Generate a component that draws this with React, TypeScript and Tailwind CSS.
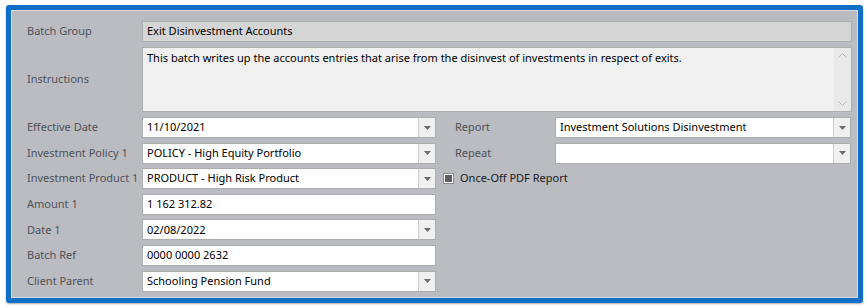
import React from "react"

const font = { fontFamily: '"Noto Sans", "Open Sans", sans-serif' }

const Arrow = () => (
    <svg width="7" height="4" viewBox="0 0 7 4">
        <path d="M0 0 H7 L3.5 4 Z" fill="#6b6b6b" />
    </svg>
)

const Label = ({ text }: { text: string }) => (
    <div className="h-[21px] flex items-center text-[11px] text-[#4f5156] whitespace-nowrap">{text}</div>
)

const TextBox = ({ value }: { value: string }) => (
    <div className="h-[21px] bg-white border border-[#adadad] flex items-center px-[4px] text-[11px] text-black whitespace-nowrap overflow-hidden">
        {value}
    </div>
)

const Combo = ({ value }: { value: string }) => (
    <div className="h-[21px] bg-white border border-[#adadad] flex text-[11px] text-black">
        <div className="flex-1 flex items-center px-[4px] whitespace-nowrap overflow-hidden">{value}</div>
        <div className="w-[17px] bg-[#f0f0f0] border-l border-[#d0d0d0] flex items-center justify-center">
            <Arrow />
        </div>
    </div>
)

const App = () => {
    return (
        <div className="w-[868px] h-[308px] bg-white pt-[5px] pl-[6px]" style={font}>
            <div className="w-[857px] h-[298px] border-[5px] border-[#0f6fc6] rounded-[3px] shadow-[0_1px_2px_rgba(0,0,0,0.35)]">
                <div className="w-full h-full bg-[#bbbcc2] border border-[#d9dadd] pl-[15px] pr-[5px] pt-[10px]">
                    <div className="grid grid-cols-[115px_1fr] gap-y-[5px]">
                        <Label text="Batch Group" />
                        <div className="h-[21px] bg-[#d5d5d5] border border-[#adadad] flex items-center px-[4px] text-[11px] text-black">
                            Exit Disinvestment Accounts
                        </div>
                        <div className="h-[65px] flex items-center text-[11px] text-[#4f5156]">Instructions</div>
                        <div className="h-[65px] bg-[#f0f0f0] border border-[#adadad] flex">
                            <div className="flex-1 px-[4px] pt-[1px] text-[11px] text-black leading-[18px]">
                                This batch writes up the accounts entries that arise from the disinvest of investments in respect of exits.
                            </div>
                            <div className="w-[17px] bg-[#e9e9e9] flex flex-col justify-between items-center py-[5px]">
                                <svg width="9" height="5" viewBox="0 0 9 5">
                                    <path d="M0.5 4.5 L4.5 0.5 L8.5 4.5" fill="none" stroke="#b5b5b5" strokeWidth="1" />
                                </svg>
                                <svg width="9" height="5" viewBox="0 0 9 5">
                                    <path d="M0.5 0.5 L4.5 4.5 L8.5 0.5" fill="none" stroke="#b5b5b5" strokeWidth="1" />
                                </svg>
                            </div>
                        </div>
                    </div>
                    <div className="mt-[5px] grid grid-cols-[115px_294px_19px_100px_296px] gap-y-[4.6px]">
                        <Label text="Effective Date" />
                        <Combo value="11/10/2021" />
                        <div />
                        <Label text="Report" />
                        <Combo value="Investment Solutions Disinvestment" />

                        <Label text="Investment Policy 1" />
                        <Combo value="POLICY - High Equity Portfolio" />
                        <div />
                        <Label text="Repeat" />
                        <Combo value="" />

                        <Label text="Investment Product 1" />
                        <Combo value="PRODUCT - High Risk Product" />
                        <div className="col-span-3 pl-[7px] h-[21px] flex items-center gap-[6px] text-[11px] text-[#1a1a1a]">
                            <div className="w-[11px] h-[11px] bg-white border border-[#8a8a8a] flex items-center justify-center">
                                <div className="w-[7px] h-[7px] bg-[#5f5f5f]" />
                            </div>
                            Once-Off PDF Report
                        </div>

                        <Label text="Amount 1" />
                        <TextBox value="1 162 312.82" />
                        <div className="col-span-3" />

                        <Label text="Date 1" />
                        <Combo value="02/08/2022" />
                        <div className="col-span-3" />

                        <Label text="Batch Ref" />
                        <TextBox value="0000 0000 2632" />
                        <div className="col-span-3" />

                        <Label text="Client Parent" />
                        <Combo value="Schooling Pension Fund" />
                        <div className="col-span-3" />
                    </div>
                </div>
            </div>
        </div>
    )
}

export default App
